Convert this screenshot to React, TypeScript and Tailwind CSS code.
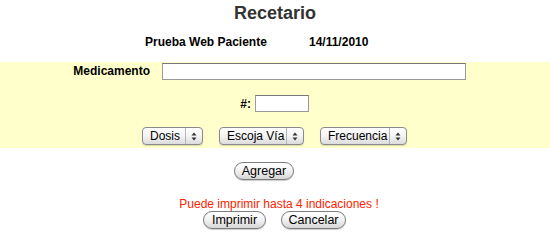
import { ReactNode } from 'react';

const MacSelect = ({ label, width }: { label: string; width: string }) => (
  <div
    className={`flex h-[18px] items-stretch rounded-[4px] border border-[#8a8a8a] bg-gradient-to-b from-white via-[#f4f4f4] to-[#dcdcdc] shadow-[0_1px_1px_rgba(0,0,0,0.15)] ${width}`}
  >
    <span className="flex flex-1 items-center whitespace-nowrap pl-[7px] text-[12px] leading-none text-black">{label}</span>
    <span className="flex w-[17px] flex-col items-center justify-center border-l border-[#b5b5b5]">
      <svg width="6" height="9" viewBox="0 0 6 9">
        <path d="M3 0.5 L5.5 3.5 H0.5 Z" fill="#333" />
        <path d="M3 8.5 L5.5 5.5 H0.5 Z" fill="#333" />
      </svg>
    </span>
  </div>
);

const PillButton = ({ children, width }: { children: ReactNode; width: string }) => (
  <button
    className={`flex h-[18px] items-center justify-center whitespace-nowrap rounded-full border border-[#7d7d7d] bg-gradient-to-b from-white via-[#f2f2f2] to-[#d6d6d6] text-[12.5px] leading-none text-black shadow-[0_1px_1px_rgba(0,0,0,0.2)] ${width}`}
  >
    {children}
  </button>
);

export default function App() {
  return (
    <div className="h-[245px] w-[550px] bg-white font-['Liberation_Sans',sans-serif]">
      <h1 className="pt-[1px] text-center text-[18px] font-bold leading-[24px] text-[#333]">Recetario</h1>

      <div className="mt-[9px] flex pl-[145px] text-[12px] font-bold leading-[16px] text-black">
        <span className="w-[164px]">Prueba Web Paciente</span>
        <span>14/11/2010</span>
      </div>

      <div className="mt-[12px] flex h-[86px] flex-col bg-[#ffffcc]">
        <div className="flex h-[18px] items-center">
          <span className="w-[150px] text-right text-[12px] font-bold text-black">Medicamento</span>
          <input className="ml-[12px] h-[17px] w-[304px] border border-[#9a9a9a] border-t-[#777] bg-white outline-none" />
        </div>
        <div className="mt-[15px] flex h-[17px] items-center">
          <span className="w-[251px] text-right text-[12px] font-bold text-black">#:</span>
          <input className="ml-[4px] h-[17px] w-[54px] border border-[#9a9a9a] border-t-[#777] bg-white outline-none" />
        </div>
        <div className="mt-[15px] flex items-center gap-[16px] pl-[142px]">
          <MacSelect label="Dosis" width="w-[61px]" />
          <MacSelect label="Escoja Vía" width="w-[85px]" />
          <MacSelect label="Frecuencia" width="w-[87px]" />
        </div>
      </div>

      <div className="mt-[14px] flex pl-[234px]">
        <PillButton width="w-[60px]">Agregar</PillButton>
      </div>

      <p className="mt-[18px] pl-[8px] text-center text-[12px] leading-[12px] text-[#ff2200]">
        Puede imprimir hasta 4 indicaciones !
      </p>

      <div className="mt-[1px] flex gap-[15px] pl-[203px]">
        <PillButton width="w-[63px]">Imprimir</PillButton>
        <PillButton width="w-[65px]">Cancelar</PillButton>
      </div>
    </div>
  );
}
